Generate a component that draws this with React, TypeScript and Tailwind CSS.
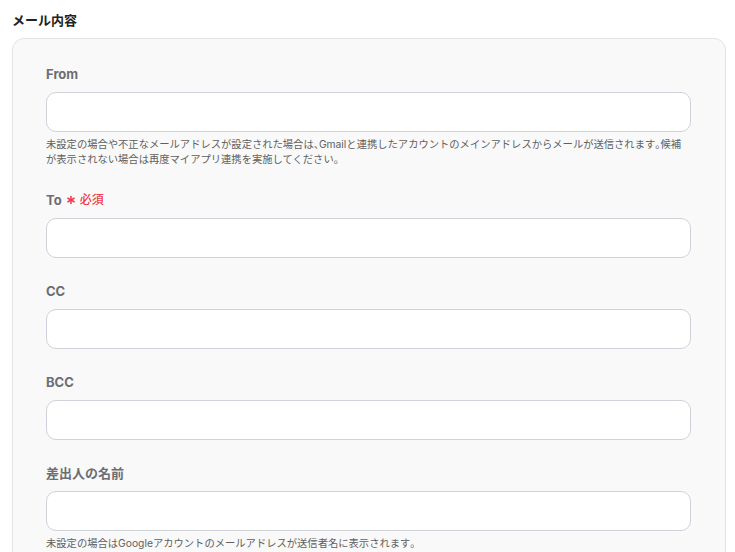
import React from 'react';
import { Asterisk } from 'lucide-react';

interface Field {
  label: string;
  required?: boolean;
  help?: string[];
}

const fields: Field[] = [
  {
    label: 'From',
    help: [
      '未設定の場合や不正なメールアドレスが設定された場合は、Gmailと連携したアカウントのメインアドレスからメールが送信されます。候補',
      'が表示されない場合は再度マイアプリ連携を実施してください。',
    ],
  },
  { label: 'To', required: true },
  { label: 'CC' },
  { label: 'BCC' },
  {
    label: '差出人の名前',
    help: ['未設定の場合はGoogleアカウントのメールアドレスが送信者名に表示されます。'],
  },
];

// 句読点だけ半角幅にする
function HelpLine({ text }: { text: string }) {
  const parts = text.split(/([、。])/);
  return (
    <div className="whitespace-nowrap">
      {parts.map((p, i) =>
        p === '、' || p === '。' ? (
          <span key={i} className="[font-feature-settings:'halt']">
            {p}
          </span>
        ) : (
          <React.Fragment key={i}>{p}</React.Fragment>
        ),
      )}
    </div>
  );
}

export default function App() {
  return (
    <div
      className="h-[552px] overflow-hidden bg-white pl-[12px] pr-[9px]"
      style={{ fontFamily: 'Inter, "Noto Sans CJK JP", sans-serif' }}
    >
      <h2 className="pt-[11px] pb-[9px] text-[13px] font-bold leading-[18px] text-[#222]">メール内容</h2>
      <div className="rounded-[12px] border border-[#e3e3e3] bg-[#f9f9f9] pl-[33px] pr-[34px] pt-[26px]">
        {fields.map((f) => (
          <div key={f.label} className="mb-[24px]">
            <div className="mb-[9px] flex items-center text-[13px] font-bold leading-[18px] text-[#6b6d72]">
              {f.label}
              {f.required && (
                <span className="ml-[2px] flex items-center text-[12px] font-medium text-[#ee3b4a]">
                  <Asterisk size={14} strokeWidth={2.6} className="mr-[2px]" />
                  必須
                </span>
              )}
            </div>
            <input
              type="text"
              className="block h-[40px] w-full rounded-[10px] border border-[#cfd2d8] bg-white px-3 text-[13px] outline-none"
            />
            {f.help && (
              <div className="mt-[5px] text-[10.3px] leading-[15px] text-[#5f5f5f]">
                {f.help.map((l) => (
                  <HelpLine key={l} text={l} />
                ))}
              </div>
            )}
          </div>
        ))}
      </div>
    </div>
  );
}
